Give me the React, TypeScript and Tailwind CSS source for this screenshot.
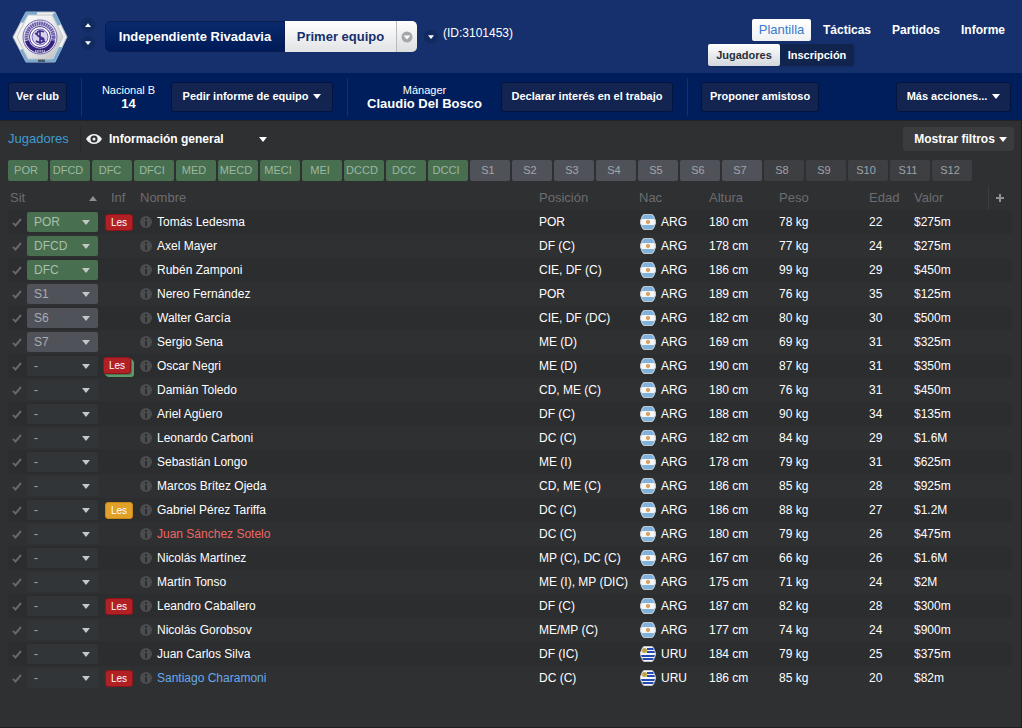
import React from 'react';

const GREEN_SLOTS = ['POR', 'DFCD', 'DFC', 'DFCI', 'MED', 'MECD', 'MECI', 'MEI', 'DCCD', 'DCC', 'DCCI'];
const SUB_SLOTS = ['S1', 'S2', 'S3', 'S4', 'S5', 'S6', 'S7'];
const EXTRA_SLOTS = ['S8', 'S9', 'S10', 'S11', 'S12'];

type Injury = 'red' | 'amber' | 'stacked';

interface Player {
  slot: string;
  injury?: Injury;
  name: string;
  tone?: 'red' | 'blue';
  position: string;
  nation: 'ARG' | 'URU';
  height: number;
  weight: number;
  age: number;
  value: string;
}

const players: Player[] = [
  { slot: 'POR', injury: 'red', name: 'Tomás Ledesma', position: 'POR', nation: 'ARG', height: 180, weight: 78, age: 22, value: '$275m' },
  { slot: 'DFCD', name: 'Axel Mayer', position: 'DF (C)', nation: 'ARG', height: 178, weight: 77, age: 24, value: '$275m' },
  { slot: 'DFC', name: 'Rubén Zamponi', position: 'CIE, DF (C)', nation: 'ARG', height: 186, weight: 99, age: 29, value: '$450m' },
  { slot: 'S1', name: 'Nereo Fernández', position: 'POR', nation: 'ARG', height: 189, weight: 76, age: 35, value: '$125m' },
  { slot: 'S6', name: 'Walter García', position: 'CIE, DF (DC)', nation: 'ARG', height: 182, weight: 80, age: 30, value: '$500m' },
  { slot: 'S7', name: 'Sergio Sena', position: 'ME (D)', nation: 'ARG', height: 169, weight: 69, age: 31, value: '$325m' },
  { slot: '-', injury: 'stacked', name: 'Oscar Negri', position: 'ME (D)', nation: 'ARG', height: 190, weight: 87, age: 31, value: '$350m' },
  { slot: '-', name: 'Damián Toledo', position: 'CD, ME (C)', nation: 'ARG', height: 180, weight: 76, age: 31, value: '$450m' },
  { slot: '-', name: 'Ariel Agüero', position: 'DF (C)', nation: 'ARG', height: 188, weight: 90, age: 34, value: '$135m' },
  { slot: '-', name: 'Leonardo Carboni', position: 'DC (C)', nation: 'ARG', height: 182, weight: 84, age: 29, value: '$1.6M' },
  { slot: '-', name: 'Sebastián Longo', position: 'ME (I)', nation: 'ARG', height: 178, weight: 79, age: 31, value: '$625m' },
  { slot: '-', name: 'Marcos Brítez Ojeda', position: 'CD, ME (C)', nation: 'ARG', height: 186, weight: 85, age: 28, value: '$925m' },
  { slot: '-', injury: 'amber', name: 'Gabriel Pérez Tariffa', position: 'DC (C)', nation: 'ARG', height: 186, weight: 88, age: 27, value: '$1.2M' },
  { slot: '-', name: 'Juan Sánchez Sotelo', tone: 'red', position: 'DC (C)', nation: 'ARG', height: 180, weight: 79, age: 26, value: '$475m' },
  { slot: '-', name: 'Nicolás Martínez', position: 'MP (C), DC (C)', nation: 'ARG', height: 167, weight: 66, age: 26, value: '$1.6M' },
  { slot: '-', name: 'Martín Tonso', position: 'ME (I), MP (DIC)', nation: 'ARG', height: 175, weight: 71, age: 24, value: '$2M' },
  { slot: '-', injury: 'red', name: 'Leandro Caballero', position: 'DF (C)', nation: 'ARG', height: 187, weight: 82, age: 28, value: '$300m' },
  { slot: '-', name: 'Nicolás Gorobsov', position: 'ME/MP (C)', nation: 'ARG', height: 177, weight: 74, age: 24, value: '$900m' },
  { slot: '-', name: 'Juan Carlos Silva', position: 'DF (IC)', nation: 'URU', height: 184, weight: 79, age: 25, value: '$375m' },
  { slot: '-', injury: 'red', name: 'Santiago Charamoni', tone: 'blue', position: 'DC (C)', nation: 'URU', height: 186, weight: 85, age: 20, value: '$82m' },
];

function Caret({ up = false, small = false }: { up?: boolean; small?: boolean }) {
  return (
    <svg viewBox="0 0 8 5" className={`shrink-0 fill-current ${small ? 'h-1 w-[6px]' : 'h-[5px] w-2'}`} aria-hidden="true">
      <path d={up ? 'M0 5l4-5 4 5z' : 'M0 0h8L4 5z'} />
    </svg>
  );
}

function RoundButton({ label, up = false }: { label: string; up?: boolean }) {
  return (
    <button type="button" aria-label={label} className="flex h-[14px] w-[14px] items-center justify-center rounded-full bg-[#112a5f]">
      <Caret up={up} small />
    </button>
  );
}

function ClubCrest() {
  return (
    <svg viewBox="0 0 56 52" className="h-[52px] w-14 shrink-0" aria-hidden="true">
      <defs>
        <linearGradient id="crest-plate" x1="0" y1="0" x2="1" y2="1">
          <stop offset="0" stopColor="#ffffff" />
          <stop offset="0.6" stopColor="#e3e3e5" />
          <stop offset="1" stopColor="#b9babd" />
        </linearGradient>
      </defs>
      <path d="M14 1h29l12 25-12 25H14L1 26z" fill="#eef0f2" stroke="#b5bcc4" />
      <path d="M14 1h11v3h-9l-5 8-3-1zM43 1l6 12-3 2-6-11zM47 36h4l-8 15H32v-3h9zM8 39l3-1 6 10h9v3H14z" fill="#79abd2" />
      <path d="M26 48h7v3h-7z" fill="#465965" />
      <path d="M16 4h24l11 22-11 22H16L5 26z" fill="url(#crest-plate)" stroke="#c3c4c7" />
      <circle cx="28" cy="26" r="17" fill="#efedf6" stroke="#6d62a8" />
      <circle cx="28" cy="26" r="13.500" fill="none" stroke="#6a5ca9" strokeWidth="4" strokeDasharray="1.800 0.500" />
      <path d="M15 30a13.500 13.500 0 0 0 26 0" fill="none" stroke="#32217c" strokeWidth="4" />
      <circle cx="28" cy="26" r="10.500" fill="#fff" stroke="#4a3a94" />
      <circle cx="28" cy="26" r="8" fill="#d8d2ec" stroke="#7568b3" />
      <path d="M32 21c-3-2-7-1-7 2 0 4 7 2 7 6 0 3-5 3-8 1M23 22l10 9M28 19v14" fill="none" stroke="#41308c" strokeWidth="1.600" />
      <path d="M23 40h10" stroke="#d9d4ec" strokeWidth="1.500" strokeDasharray="1.500 0.700" />
    </svg>
  );
}

function Flag({ nation }: { nation: Player['nation'] }) {
  const id = `flag-${nation}`;
  return (
    <svg viewBox="0 0 16 16" className="h-4 w-4 shrink-0" aria-hidden="true">
      <clipPath id={id}>
        <path d="M4 0h8l2 2 2 5v2l-2 5-2 2H4l-2-2-2-5V7l2-5z" />
      </clipPath>
      <g clipPath={`url(#${id})`}>
        <path d="M0 0h16v16H0z" fill="#f4f6f8" />
        {nation === 'ARG' ? (
          <>
            <path d="M0 0h16v5H0zM0 11h16v5H0z" fill="#7fb2dc" />
            <circle cx="8" cy="8" r="2" fill="#d99a4e" />
          </>
        ) : (
          <>
            <path d="M7 2h9v2H7zM7 5h9v2H7zM0 9h16v2H0zM0 12h16v2H0z" fill="#2349b0" />
            <circle cx="4.500" cy="4.500" r="2.500" fill="#c2a240" />
          </>
        )}
        <path d="M4 .500h8l1.500 2 2 4.500v2l-2 4.500-1.500 2H4l-1.500-2L.500 9V7l2-4.500z" fill="none" stroke="#c4c6c8" />
      </g>
    </svg>
  );
}

function InfoIcon() {
  return (
    <svg viewBox="0 0 12 12" className="h-3 w-3 shrink-0" aria-hidden="true">
      <circle cx="6" cy="6" r="6" fill="#4b4c4e" />
      <path d="M5 2h2v2H5zM5 5h2v5H5z" fill="#2c2d2f" />
    </svg>
  );
}

function InjuryBadge({ kind }: { kind: Injury }) {
  if (kind === 'stacked') {
    return (
      <span className="-ml-[2px] mb-[2px] block h-[17px] w-7 rounded-[3px] border border-[#8d1519] bg-[#b02024] text-center text-[10px] leading-[15px] shadow-[1px_1px_0_#477752,2px_2px_0_#5f9a6d,3px_3px_0_#5f9a6d]">
        Les
      </span>
    );
  }
  return (
    <span
      className={`block h-[17px] w-7 rounded-[3px] border text-center text-[10px] leading-[15px] ${
        kind === 'red' ? 'border-[#8d1519] bg-[#b02024]' : 'border-[#c98a12] bg-[#e0a029]'
      }`}
    >
      Les
    </span>
  );
}

function slotTone(slot: string) {
  if (slot === '-') return 'bg-[#323538] text-[#a5a6a8]';
  if (slot.startsWith('S')) return 'bg-[#50525a] text-[#a9abb0]';
  return 'bg-[#486f4f] text-[#a9bfac]';
}

function SlotSelect({ player }: { player: Player }) {
  return (
    <div className={`grid h-5 w-[71px] items-center rounded-xs ${slotTone(player.slot)}`}>
      <select
        aria-label={`Sit ${player.name}`}
        defaultValue={player.slot}
        className="col-start-1 row-start-1 h-5 w-full appearance-none bg-transparent pl-[7px] text-[12px] leading-5 outline-none"
      >
        <option>{player.slot}</option>
      </select>
      <span className="pointer-events-none col-start-1 row-start-1 mr-2 mt-px justify-self-end text-[#c3c7c5]">
        <Caret />
      </span>
    </div>
  );
}

function SlotChip({ label, tone }: { label: string; tone: string }) {
  return (
    <button type="button" className={`h-[21px] w-10 shrink-0 rounded-xs pr-1 text-[11px] ${tone}`}>
      {label}
    </button>
  );
}

function ActionButton({ children, className = '' }: { children: React.ReactNode; className?: string }) {
  return (
    <button
      type="button"
      className={`flex h-[30px] shrink-0 items-center justify-center gap-[5px] whitespace-nowrap rounded-[3px] border border-[#03143f] bg-[#12244f] text-[11px] font-bold ${className}`}
    >
      {children}
    </button>
  );
}

function Divider() {
  return <div className="ml-[14px] h-[38px] w-px bg-[#17326b]" />;
}

function Header() {
  return (
    <header className="flex h-[73px] justify-between bg-[#15306c]">
      <div className="flex items-center pl-3">
        <ClubCrest />
        <div className="mb-[5px] ml-[13px] flex flex-col gap-1">
          <RoundButton label="Club anterior" up />
          <RoundButton label="Club siguiente" />
        </div>
        <div className="ml-[10px] flex h-[31px] text-[13px] font-bold">
          <button type="button" className="w-[180px] whitespace-nowrap rounded-l-[5px] border border-[#0b1d4e] bg-gradient-to-b from-[#082a6c] to-[#001a58]">
            Independiente Rivadavia
          </button>
          <button type="button" className="w-[111px] whitespace-nowrap bg-gradient-to-b from-white to-[#e2e3e5] text-[#15306c]">
            Primer equipo
          </button>
          <button
            type="button"
            aria-label="Cambiar equipo"
            className="flex w-[21px] items-center justify-center rounded-r-[5px] border-l border-[#b9babc] bg-gradient-to-b from-white to-[#dcdddf]"
          >
            <svg viewBox="0 0 12 12" className="h-3 w-3" aria-hidden="true">
              <circle cx="6" cy="6" r="5.500" fill="#a6a7a9" />
              <path d="M2.500 4.500h7L6 8.500z" fill="#fff" />
            </svg>
          </button>
        </div>
        <div className="ml-[7px]">
          <RoundButton label="Más equipos" />
        </div>
        <span className="mb-2 ml-[5px] text-[12px]">(ID:3101453)</span>
      </div>
      <div className="flex flex-col items-end pt-[19px] pr-4">
        <nav className="flex h-[22px] items-center gap-5 text-[12px] font-bold">
          <a href="#plantilla" className="-mr-2 flex h-[22px] w-[59px] items-center justify-center rounded-xs bg-gradient-to-b from-white to-[#f0f1f3] text-[13px] font-normal text-[#3b7bcb]">
            Plantilla
          </a>
          <a href="#tacticas" className="w-[49px]">Tácticas</a>
          <a href="#partidos" className="w-[49px]">Partidos</a>
          <a href="#informe" className="w-[45px]">Informe</a>
        </nav>
        <nav className="mr-[152px] mt-[3px] flex h-[22px] rounded-xs bg-[#10244e] text-[11px] font-bold leading-[22px] shadow-sm">
          <a href="#jugadores" className="w-[72px] rounded-xs bg-gradient-to-b from-white to-[#d3d7dd] text-center text-[#27303c]">
            Jugadores
          </a>
          <a href="#inscripcion" className="w-[74px] text-center">
            Inscripción
          </a>
        </nav>
      </div>
    </header>
  );
}

function ClubBar() {
  return (
    <section className="flex h-[47px] items-center bg-[#001e5c] px-2 shadow-[0_1px_0_#222326]">
      <ActionButton className="w-[59px]">Ver club</ActionButton>
      <Divider />
      <div className="w-[89px] pl-1 text-center leading-[14px]">
        <div className="text-[11px]">Nacional B</div>
        <div className="text-[13px] font-bold">14</div>
      </div>
      <ActionButton className="w-[162px]">
        Pedir informe de equipo <Caret />
      </ActionButton>
      <Divider />
      <div className="w-[153px] text-center leading-[14px]">
        <div className="text-[11px]">Mánager</div>
        <div className="text-[13px] font-bold">Claudio Del Bosco</div>
      </div>
      <ActionButton className="w-[172px]">Declarar interés en el trabajo</ActionButton>
      <Divider />
      <ActionButton className="ml-[13px] w-[118px]">Proponer amistoso</ActionButton>
      <ActionButton className="ml-auto mr-[3px] w-[115px]">
        Más acciones... <Caret />
      </ActionButton>
    </section>
  );
}

function SquadTable() {
  return (
    <table className="mt-[5px] w-full table-fixed border-collapse text-left text-[12px]">
      <colgroup>
        <col className="w-[92px]" />
        <col className="w-[40px]" />
        <col />
        <col className="w-[100px]" />
        <col className="w-[70px]" />
        <col className="w-[70px]" />
        <col className="w-[90px]" />
        <col className="w-[45px]" />
        <col className="w-[74px]" />
        <col className="w-[24px]" />
      </colgroup>
      <thead>
        <tr className="h-6 text-[13px] text-[#6c6d70] [&>th]:p-0 [&>th]:font-normal">
          <th>
            <div className="flex items-center justify-between pl-[2px] pr-[3px]">
              Sit
              <span className="text-[#8b8e94]">
                <Caret up />
              </span>
            </div>
          </th>
          <th><span className="pl-[11px]">Inf</span></th>
          <th>Nombre</th>
          <th>Posición</th>
          <th>Nac</th>
          <th>Altura</th>
          <th>Peso</th>
          <th>Edad</th>
          <th>Valor</th>
          <th className="border-l border-[#3c3d40]">
            <button type="button" aria-label="Añadir columna" className="flex h-6 w-full items-center justify-center text-[#8d9197]">
              <svg viewBox="0 0 8 8" className="h-2 w-2" aria-hidden="true">
                <path d="M4 0v8M0 4h8" stroke="currentColor" strokeWidth="2" />
              </svg>
            </button>
          </th>
        </tr>
      </thead>
      <tbody>
        {players.map((player) => (
          <tr key={player.name} className="h-6 odd:bg-[#2c2d2f] [&>td]:whitespace-nowrap [&>td]:p-0">
            <td>
              <div className="flex items-center gap-1 pl-[2px]">
                <label className="grid h-[13px] w-[13px] place-items-center">
                  <input
                    type="checkbox"
                    defaultChecked
                    aria-label={`Seleccionar ${player.name}`}
                    className="peer col-start-1 row-start-1 h-[13px] w-[13px] appearance-none"
                  />
                  <svg viewBox="0 0 10 9" className="pointer-events-none col-start-1 row-start-1 hidden h-[9px] w-[10px] peer-checked:block" aria-hidden="true">
                    <path d="M1 5l2.500 2.500L9 1" fill="none" stroke="#66676a" strokeWidth="2" />
                  </svg>
                </label>
                <SlotSelect player={player} />
              </div>
            </td>
            <td>
              <div className="pl-[5px]">{player.injury && <InjuryBadge kind={player.injury} />}</div>
            </td>
            <td>
              <a
                href="#jugador"
                className={`flex items-center gap-[5px] ${
                  player.tone === 'red' ? 'text-[#ee6664]' : player.tone === 'blue' ? 'text-[#67a9ec]' : ''
                }`}
              >
                <InfoIcon />
                {player.name}
              </a>
            </td>
            <td>{player.position}</td>
            <td>
              <div className="flex items-center gap-[5px] pl-px">
                <Flag nation={player.nation} />
                {player.nation}
              </div>
            </td>
            <td>{`${player.height} cm`}</td>
            <td>{`${player.weight} kg`}</td>
            <td>{player.age}</td>
            <td>{player.value}</td>
            <td />
          </tr>
        ))}
      </tbody>
    </table>
  );
}

export default function App() {
  return (
    <div className="flex min-h-screen flex-col bg-[#2f3032] font-['Liberation_Sans',Arial,sans-serif] text-white">
      <Header />
      <ClubBar />
      <main className="flex-1 border-r border-b border-[#1f2022] pl-2 pr-[9px]">
        <div className="-mr-0.5 flex h-[38px] items-center">
          <h1 className="w-[72px] text-[13px] text-[#3f9bd3]">Jugadores</h1>
          <div className="h-[26px] w-px bg-[#27282a]" />
          <button type="button" className="ml-[5px] flex h-6 w-[181px] items-center gap-[7px] text-[12px] font-bold">
            <svg viewBox="0 0 16 12" className="h-3 w-4" aria-hidden="true">
              <path d="M0 6C2 2.500 5 1 8 1s6 1.500 8 5c-2 3.500-5 5-8 5S2 9.500 0 6z" fill="#f1f1f1" />
              <circle cx="8" cy="6" r="3.500" fill="#2f3032" />
              <circle cx="8" cy="6" r="1.500" fill="#f1f1f1" />
            </svg>
            <span className="flex-1 text-left">Información general</span>
            <Caret />
          </button>
          <button type="button" className="ml-auto flex h-6 w-[111px] items-center justify-center gap-1 rounded-[3px] bg-[#3b3c3e] pl-1 text-[12px] font-bold">
            Mostrar filtros <Caret />
          </button>
        </div>
        <div className="mt-[2px] flex gap-[2px]">
          {GREEN_SLOTS.map((slot) => (
            <SlotChip key={slot} label={slot} tone="bg-[#486f4f] text-[#9db8a2]" />
          ))}
          {SUB_SLOTS.map((slot) => (
            <SlotChip key={slot} label={slot} tone="bg-[#50525a] text-[#a3a5aa]" />
          ))}
          {EXTRA_SLOTS.map((slot) => (
            <SlotChip key={slot} label={slot} tone="bg-[#3d3f43] text-[#a0a2a6]" />
          ))}
        </div>
        <SquadTable />
      </main>
    </div>
  );
}
